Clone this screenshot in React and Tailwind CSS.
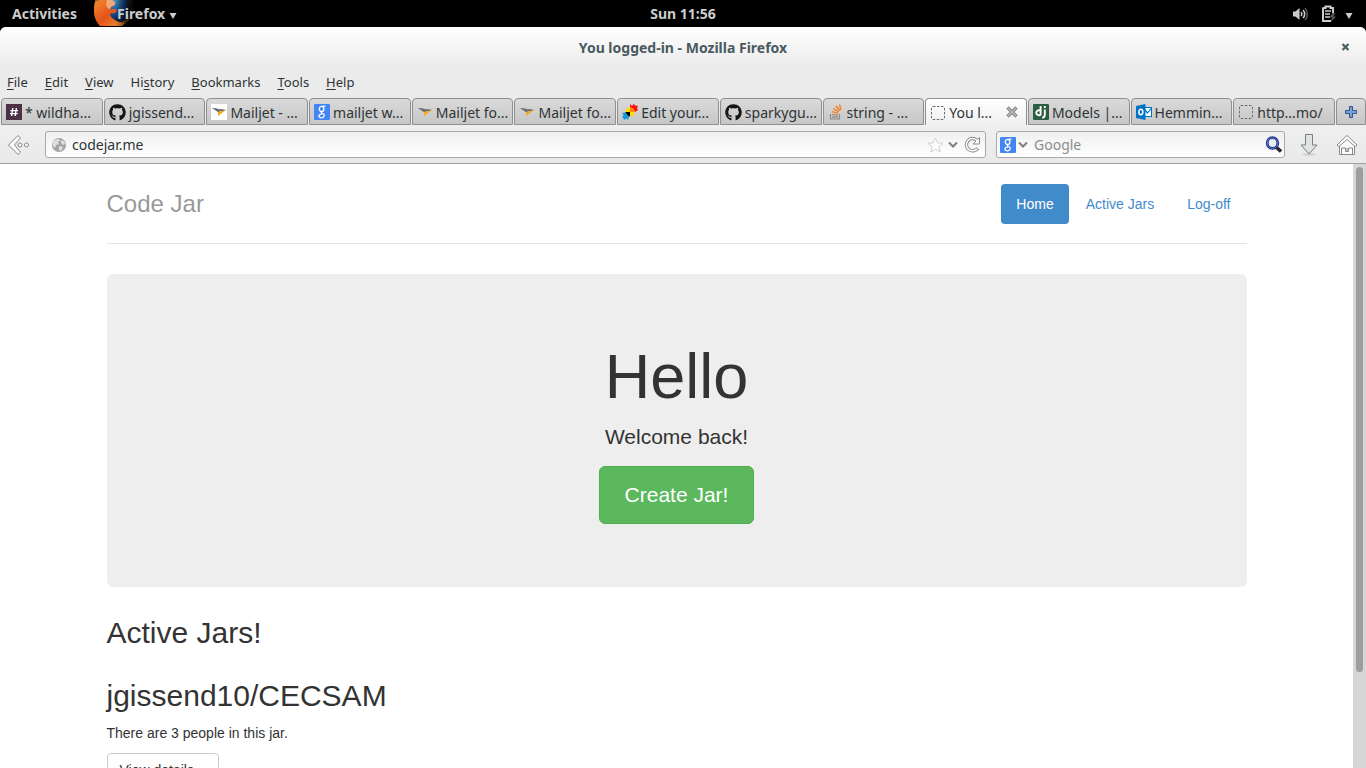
import React, { useState } from 'react';
import { FaGithub } from 'react-icons/fa';

const UI_FONT = "font-['Noto_Sans','Open_Sans',sans-serif]";
const PAGE_FONT = "font-['Liberation_Sans',Arial,sans-serif]";

function HashIcon() {
  return (
    <svg width="16" height="16" viewBox="0 0 16 16">
      <rect width="16" height="16" fill="#4b3048" />
      <path d="M6.8 4 5.6 12M10.4 4 9.2 12M4.4 6.6h7.6M4 9.6h7.6" stroke="#fff" strokeWidth="1.4" />
    </svg>
  );
}

function MailjetIcon({ boxed }) {
  return (
    <svg width="16" height="16" viewBox="0 0 16 16">
      {boxed && <rect width="16" height="16" fill="#fff" />}
      <path d="M1 4 15 6 7 8z" fill="#55585a" />
      <path d="M15 6 7 8 7 12z" fill="#f5a81c" />
      <path d="M1 4 8 7 15 6z" fill="#77797b" />
    </svg>
  );
}

function GoogleIcon() {
  return (
    <svg width="16" height="16" viewBox="0 0 16 16">
      <rect width="16" height="16" rx="1" fill="#4285f4" />
      <g fill="none" stroke="#fff" strokeWidth="1.3">
        <ellipse cx="7.6" cy="4.9" rx="2.3" ry="2.6" />
        <path d="M8.5 2.2h3M8.2 7.5C6 8.8 8 9.2 9.2 9.8c1.8 1 1.3 4-1.6 4-3.6 0-3.6-3.4.3-3.6" />
      </g>
    </svg>
  );
}

function WikiPuzzleIcon() {
  return (
    <svg width="16" height="16" viewBox="0 0 16 16">
      <path d="M8 0l2 2 1.6-2 1.6 1.6L16 2l-1 2 1 2-3 2-5-4z" fill="#f11" />
      <circle cx="8" cy="8" r="4.6" fill="#fd0" />
      <path d="M8 8V3.4a4.6 4.6 0 0 1 4.6 4.6z" fill="#f80" />
      <path d="M8 8v4.6A4.6 4.6 0 0 1 3.4 8z" fill="#000" />
      <path d="M3.4 8.5 0 9l1.5 2L0 13.5l1.5.5.5 2 2.5-1.5 1.5 1.5 1-3.5z" fill="#19d" />
    </svg>
  );
}

function StackIcon() {
  return (
    <svg width="16" height="16" viewBox="0 0 16 16" fill="none">
      <path d="M2.5 10v5h9v-5" stroke="#8b8b8b" strokeWidth="1.2" />
      <path d="M4 13h6" stroke="#8b8b8b" strokeWidth="1.3" />
      <path d="M4 10.6 10 11.2" stroke="#a58b6d" strokeWidth="1.3" />
      <path d="M4.2 7.6 10.2 9.4M5.4 4.6l5.4 3.2M8 2l4 4.7M11.5.5l1.4 5.4" stroke="#f48024" strokeWidth="1.5" />
    </svg>
  );
}

function BlankIcon() {
  return (
    <svg width="16" height="16" viewBox="0 0 16 16">
      <rect x="1.5" y="1.5" width="13" height="13" rx="1.5" fill="none" stroke="#6e6e6e" strokeDasharray="2.5 1.5" />
    </svg>
  );
}

function DjangoIcon() {
  return (
    <svg width="16" height="16" viewBox="0 0 16 16">
      <rect width="16" height="16" rx="1" fill="#2b5e41" />
      <g fill="none" stroke="#fff" strokeWidth="1.9">
        <path d="M7.6 2v9.2M7.6 6.4C1.8 4.8 1.8 12.6 7.6 11" />
        <path d="M11.8 5.6v5.2c0 2-.8 2.7-2.6 3M11.8 2v2" />
      </g>
    </svg>
  );
}

function OutlookIcon() {
  return (
    <svg width="16" height="16" viewBox="0 0 16 16">
      <rect x="8" y="3.5" width="7.5" height="9" fill="#fff" stroke="#0072c6" />
      <path d="m9 6 2.5 3L15 4.5" fill="none" stroke="#0072c6" strokeWidth="1.2" />
      <path d="M0 2 9.5 0v16L0 14z" fill="#0072c6" />
      <ellipse cx="4.8" cy="8" rx="2" ry="2.7" fill="none" stroke="#fff" strokeWidth="1.5" />
    </svg>
  );
}

function FirefoxIcon() {
  return (
    <svg width="42" height="26" viewBox="0 0 42 26" className="absolute left-0 top-0">
      <defs>
        <radialGradient id="globe" cx="0.4" cy="0.2" r="0.8">
          <stop offset="0" stopColor="#4ba3d6" />
          <stop offset="0.6" stopColor="#174c8c" />
          <stop offset="1" stopColor="#061a3c" />
        </radialGradient>
        <linearGradient id="fur" x1="0" y1="0" x2="1" y2="1">
          <stop offset="0" stopColor="#f58a2c" />
          <stop offset="0.5" stopColor="#e4541c" />
          <stop offset="1" stopColor="#f39a32" />
        </linearGradient>
        <linearGradient id="fade" x1="0" x2="1">
          <stop offset="0.5" stopColor="#000" stopOpacity="0" />
          <stop offset="0.95" stopColor="#000" />
        </linearGradient>
      </defs>
      <circle cx="20" cy="7" r="20" fill="#8a5a17" />
      <circle cx="22" cy="8" r="15" fill="url(#globe)" />
      <path
        d="M2 0c1 2 2 1 3 0h8c1 1 3 0 5 0l3 2c1 3-2 4-4 5l-1 2c2 1 5-1 7 1-1 4-5 3-7 4 1 5 7 8 15 9l-4 4H7C2 22 0 17 0 11 0 6 1 3 2 0z"
        fill="url(#fur)"
      />
      <path d="M13 0h5l3 2c1 3-2 4-4 5l-1 2c-3 0-5-4-3-9z" fill="#f6c49a" opacity="0.7" />
      <rect width="42" height="26" fill="url(#fade)" />
    </svg>
  );
}

function SpeakerIcon() {
  return (
    <svg width="16" height="16" viewBox="0 0 16 16" fill="none">
      <path d="M0 5.5h2.5L6.500 2v12l-4-3.5H0z" fill="#ccc" />
      <path d="M8 6c1 1 1 3 0 4M10 4c2.200 2 2.200 6 0 8" stroke="#ccc" strokeWidth="1.6" />
      <path d="M12 2c3 3 3 9 0 12" stroke="#555" strokeWidth="1.6" />
    </svg>
  );
}

function BatteryIcon() {
  return (
    <svg width="16" height="18" viewBox="0 0 16 18" fill="none">
      <path d="M2 3h2.5V1.5h5V3H12v5M2 2.5v13.5h8" stroke="#ccc" strokeWidth="2" />
      <path d="M4 6h6M4 9h5M4 12h5" stroke="#ccc" strokeWidth="1.5" />
      <path d="m11.5 8-3 4.5H11L10 17l5-5.5h-2.5L14 8z" fill="#555" />
    </svg>
  );
}

function DownArrow() {
  return (
    <svg width="8" height="6" viewBox="0 0 8 6" className="relative mt-1">
      <path d="M.5 0h7L4 6z" fill="#ccc" />
    </svg>
  );
}

function BackIcon() {
  return (
    <svg width="24" height="22" viewBox="0 0 24 22" fill="#fafafa" stroke="#888a85">
      <path d="m11 1.5 2.5 2.3L7.5 11l6 7.2L11 20.5 1.5 11z" strokeLinejoin="round" />
      <circle cx="13" cy="11" r="2" />
      <circle cx="19.5" cy="11" r="2" />
    </svg>
  );
}

function GlobeIcon() {
  return (
    <svg width="16" height="16" viewBox="0 0 16 16">
      <circle cx="8" cy="8" r="7" fill="#a4a4a4" />
      <path d="M2 5c2-3 4-3 6-3l1 2-2 1 1 2-3 1-1 3C2 10 1 8 2 5zM10 3l3 1 1 3-2 1-2-2zM8 9l4 1-2 4-2-1z" fill="#dedede" />
    </svg>
  );
}

function ChevronIcon() {
  return (
    <svg width="10" height="8" viewBox="0 0 10 8" fill="none">
      <path d="m1 1.5 4 4 4-4" stroke="#7d7f7b" strokeWidth="2" />
    </svg>
  );
}

function StarIcon() {
  return (
    <svg width="17" height="16" viewBox="0 0 17 16">
      <path d="m8.5 1 2.2 4.8 5.3.5-4 3.6 1.2 5.1-4.7-2.7L3.8 15 5 9.9 1 6.3l5.3-.5z" fill="#fdfdfd" stroke="#d0d0d0" strokeLinejoin="round" />
    </svg>
  );
}

function ReloadIcon() {
  return (
    <svg width="17" height="17" viewBox="0 0 17 17" fill="none">
      <path d="M13.8 12.2A6.2 6.2 0 1 1 12.5 3.8" stroke="#888a85" strokeWidth="3.4" />
      <path d="M15.5 1.5v6.5H9z" fill="#fff" stroke="#888a85" strokeLinejoin="round" />
      <path d="M13.3 12.7A6.2 6.2 0 1 1 12.5 3.8L13.5 5" stroke="#fff" strokeWidth="1.5" />
    </svg>
  );
}

function SearchIcon() {
  return (
    <svg width="17" height="17" viewBox="0 0 17 17" fill="none">
      <path d="m11 11 5 4.5" stroke="#26262b" strokeWidth="3.5" />
      <circle cx="7.5" cy="7" r="5.3" fill="#e8edf5" stroke="#22328c" strokeWidth="2.8" />
      <circle cx="7.5" cy="7" r="5.3" stroke="#5b72c4" strokeWidth="1" />
    </svg>
  );
}

function DownloadIcon() {
  return (
    <svg width="20" height="24" viewBox="0 0 20 24">
      <ellipse cx="10" cy="21.5" rx="7" ry="1.5" fill="#d2d2d2" />
      <path d="M6.5 1.5h7v10.5H18L10 21l-8-9h4.5z" fill="#dfe3e3" stroke="#7c7e7a" strokeLinejoin="round" />
    </svg>
  );
}

function HomeIcon() {
  return (
    <svg width="22" height="22" viewBox="0 0 22 22" strokeLinejoin="round">
      <path d="M3.5 11v9.5h15V11L11 4z" fill="#fafafa" stroke="#888a85" />
      <path d="M11 1.5 1 11l1.8 1.6L11 5.5l8.2 7.1L21 11z" fill="#fff" stroke="#888a85" />
      <path d="M5.5 20v-6h4v3.5h3V14h4v6M11 14v3" fill="none" stroke="#888a85" />
    </svg>
  );
}

const GitHub = () => <FaGithub size={17} color="#151515" />;

const MENUS = [
  ['', 'F', 'ile'],
  ['', 'E', 'dit'],
  ['', 'V', 'iew'],
  ['Hi', 's', 'tory'],
  ['', 'B', 'ookmarks'],
  ['', 'T', 'ools'],
  ['', 'H', 'elp'],
];

const TABS = [
  { title: '* wildha...', icon: <HashIcon /> },
  { title: 'jgissend...', icon: <GitHub /> },
  { title: 'Mailjet - ...', icon: <MailjetIcon boxed /> },
  { title: 'mailjet w...', icon: <GoogleIcon /> },
  { title: 'Mailjet fo...', icon: <MailjetIcon /> },
  { title: 'Mailjet fo...', icon: <MailjetIcon /> },
  { title: 'Edit your...', icon: <WikiPuzzleIcon /> },
  { title: 'sparkygu...', icon: <GitHub /> },
  { title: 'string - ...', icon: <StackIcon /> },
  { title: 'You l...', icon: <BlankIcon /> },
  { title: 'Models |...', icon: <DjangoIcon /> },
  { title: 'Hemmin...', icon: <OutlookIcon /> },
  { title: 'http...mo/', icon: <BlankIcon /> },
];

function TopBar() {
  return (
    <div className="grid grid-cols-3 h-[27px] shrink-0 overflow-hidden bg-black text-[#ccc] leading-[27px] font-bold">
      <div className="flex items-center pl-3">
        <button>Activities</button>
        <button className="relative ml-[17px] h-[27px] pl-[23px] flex items-center gap-1">
          <FirefoxIcon />
          <span className="relative">Firefox</span>
          <DownArrow />
        </button>
      </div>
      <div className="text-center">Sun 11:56</div>
      <div className="flex items-center justify-end pr-[13px]">
        <button aria-label="Volume" className="mr-3"><SpeakerIcon /></button>
        <button aria-label="Battery" className="flex items-center gap-2">
          <BatteryIcon />
          <DownArrow />
        </button>
      </div>
    </div>
  );
}

function TabStrip() {
  const [active, setActive] = useState(9);

  return (
    <div className="flex h-[27px] pl-px gap-px">
      {TABS.map((tab, i) => (
        <div
          key={i}
          className={`flex flex-1 min-w-0 items-center rounded-t-[4px] border border-[#8f8f8f] ${
            i === active ? 'border-b-0 bg-linear-to-b from-white to-[#efefef]' : 'bg-linear-to-b from-[#dadada] to-[#c6c6c6]'
          }`}
        >
          <button onClick={() => setActive(i)} className="flex flex-1 min-w-0 items-center gap-[3px] pl-1 pt-px whitespace-nowrap">
            <span className="shrink-0">{tab.icon}</span>
            <span>{tab.title}</span>
          </button>
          {i === active && (
            <button aria-label="Close tab" className="mr-2">
              <svg width="12" height="12" viewBox="0 0 12 12">
                <path d="m1.5 1.5 9 9M10.5 1.5l-9 9" stroke="#858783" strokeWidth="3.4" />
                <path d="m2 2 8 8M10 2l-8 8" stroke="#bcbdba" strokeWidth="1.4" />
              </svg>
            </button>
          )}
        </div>
      ))}
      <button aria-label="New tab" className="flex w-[30px] items-center justify-center rounded-t-[4px] border border-[#8f8f8f] bg-linear-to-b from-[#dadada] to-[#c6c6c6]">
        <svg width="12" height="12" viewBox="0 0 12 12">
          <path d="M4.5.5h3v4h4v3h-4v4h-3v-4h-4v-3h4z" fill="#7ba0d4" stroke="#2d5495" />
        </svg>
      </button>
    </div>
  );
}

function Toolbar() {
  const field = 'flex h-[27px] items-center rounded-[3px] border border-[#a9aaa8] bg-linear-to-b from-[#f0f0f0] to-white';

  return (
    <div className="flex h-[39px] items-center border-b border-[#a1a1a1] bg-linear-to-b from-[#efefef] to-[#e9e9e9] pt-px pl-[7px] pr-2">
      <button aria-label="Back"><BackIcon /></button>
      <div className={`${field} ml-[14px] flex-1 pl-[5px] pr-1`}>
        <GlobeIcon />
        <input aria-label="Address" defaultValue="codejar.me" className="ml-[5px] min-w-0 flex-1 bg-transparent outline-none" />
        <button aria-label="Bookmark this page"><StarIcon /></button>
        <button aria-label="Show history" className="ml-1"><ChevronIcon /></button>
        <button aria-label="Reload" className="ml-[6px]"><ReloadIcon /></button>
      </div>
      <div className={`${field} ml-[10px] w-[289px] pl-[3px] pr-[2px]`}>
        <button aria-label="Search engine" className="flex items-center gap-[2px]">
          <GoogleIcon />
          <ChevronIcon />
        </button>
        <input aria-label="Search" placeholder="Google" className="ml-[6px] min-w-0 flex-1 bg-transparent outline-none placeholder:text-[#8b8d8d]" />
        <button aria-label="Go"><SearchIcon /></button>
      </div>
      <button aria-label="Downloads" className="ml-[14px]"><DownloadIcon /></button>
      <button aria-label="Home page" className="ml-[17px]"><HomeIcon /></button>
    </div>
  );
}

function BrowserChrome() {
  return (
    <div className="shrink-0 bg-black">
      <div className="rounded-t-[6px] bg-[#ebebeb] text-[#2e3436]">
        <div className="grid h-10 grid-cols-[1fr_auto_1fr] items-center rounded-t-[6px] bg-linear-to-b from-white to-[#ebebeb] font-bold text-[#4a5a60]">
          <span />
          <h1>You logged-in - Mozilla Firefox</h1>
          <button aria-label="Close window" className="mr-4 justify-self-end">
            <svg width="9" height="8" viewBox="0 0 9 8"><path d="m1.5 1 6 6M7.5 1l-6 6" stroke="#4a6168" strokeWidth="2.3" /></svg>
          </button>
        </div>
        <div className="flex h-[31px] items-center gap-[17px] pl-[7px] text-[13px]">
          {MENUS.map(([before, key, after]) => (
            <button key={key + after}>
              {before}<span className="underline underline-offset-2">{key}</span>{after}
            </button>
          ))}
        </div>
        <TabStrip />
        <Toolbar />
      </div>
    </div>
  );
}

function JarPage() {
  return (
    <div className={`min-w-0 flex-1 overflow-hidden bg-white px-4 pt-5 text-sm text-[#333] ${PAGE_FONT}`}>
      <div className="mx-auto max-w-[1140px]">
        <header className="flex items-start justify-between border-b border-[#e5e5e5] pb-[19px]">
          <h3 className="text-2xl leading-10 text-[#999]">Code Jar</h3>
          <nav className="flex gap-[2px] leading-5 text-[#428bca]">
            <a href="#home" className="rounded-[4px] bg-[#428bca] px-[15px] py-[10px] text-white">Home</a>
            <a href="#jars" className="px-[15px] py-[10px]">Active Jars</a>
            <a href="#logoff" className="px-4 py-[10px]">Log-off</a>
          </nav>
        </header>

        <section className="mt-[30px] flex flex-col items-center rounded-[6px] bg-[#eee] pt-[67px] pb-[63px]">
          <h1 className="text-[63px] leading-[70px]">Hello</h1>
          <p className="mt-[11px] text-[21px] leading-[30px]">Welcome back!</p>
          <a href="#create" className="mt-[14px] rounded-[6px] border border-[#4cae4c] bg-[#5cb85c] px-[25px] py-[13px] text-[21px] leading-[30px] text-white">
            Create Jar!
          </a>
        </section>

        <h2 className="mt-[29px] text-3xl leading-[33px]">Active Jars!</h2>
        <h2 className="mt-[30px] text-3xl leading-[33px]">jgissend10/CECSAM</h2>
        <p className="mt-[11px] leading-5">There are 3 people in this jar.</p>
        <a href="#details" className="mt-[10px] inline-block rounded-[4px] border border-[#ccc] px-3 py-[6px] leading-5">
          View details »
        </a>
      </div>
    </div>
  );
}

export default function App() {
  return (
    <div className={`flex h-screen flex-col overflow-hidden text-[14px] ${UI_FONT}`}>
      <TopBar />
      <BrowserChrome />
      <div className="flex min-h-0 flex-1">
        <JarPage />
        <div className="w-[13px] bg-[#d6d6d6] px-[3px] pt-[3px]">
          <div className="h-[84%] w-[7px] rounded-full bg-[#9b9d9e]" />
        </div>
      </div>
    </div>
  );
}
